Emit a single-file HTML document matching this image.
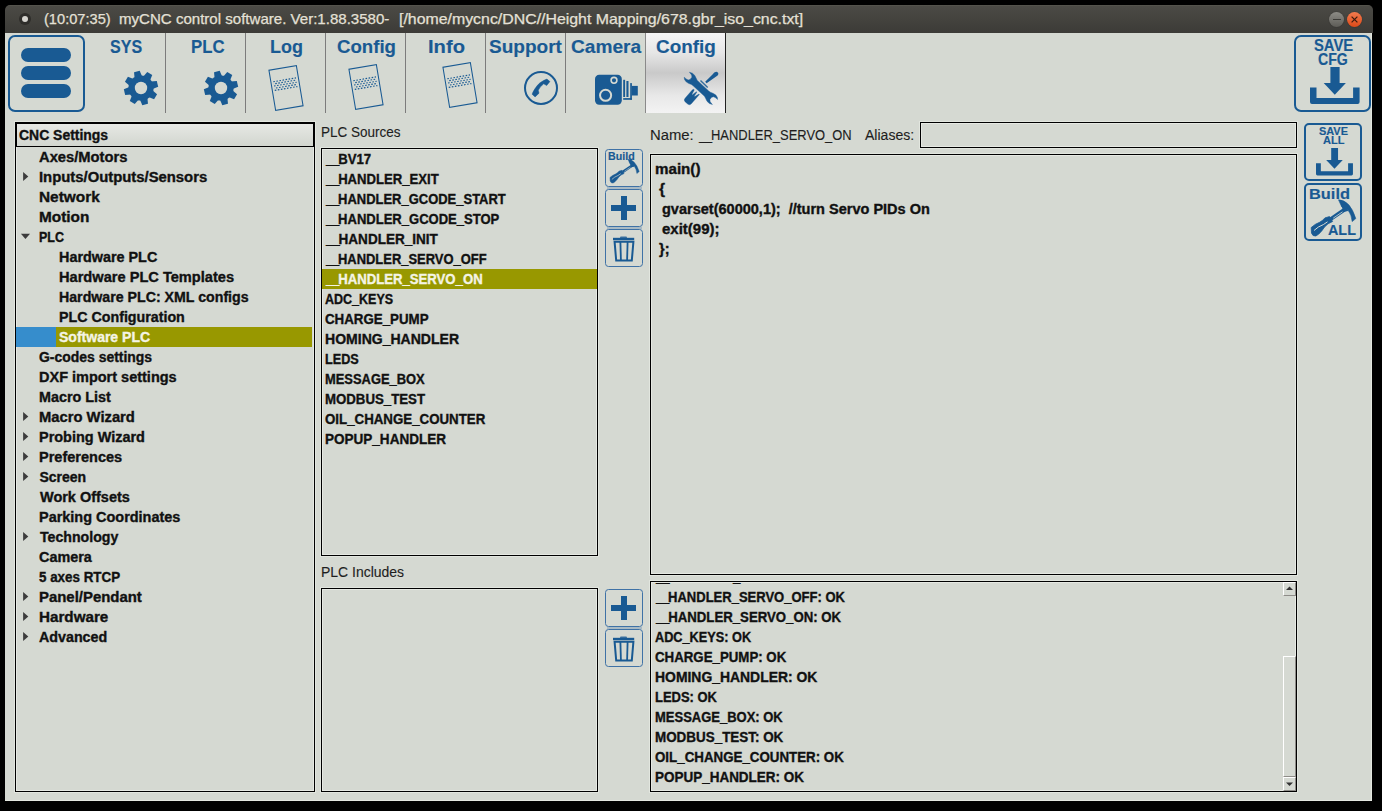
<!DOCTYPE html>
<html><head><meta charset="utf-8">
<style>
html,body{margin:0;padding:0;width:1382px;height:811px;overflow:hidden;background:#000;font-family:"Liberation Sans",sans-serif}
div,svg{position:absolute;box-sizing:border-box}
.x{white-space:pre;line-height:normal;transform-origin:0 0}
.x[style*="font-weight:700"]{-webkit-text-stroke:0.35px currentColor}
.x[style*="color:#195a93"]{-webkit-text-stroke:0.15px currentColor}
.x[style*="color:#1e1e1e"]{-webkit-text-stroke:0.12px currentColor}
.sep{top:33px;width:1px;height:80px;background:#7c7c7c}
.btn{border:1px solid #3f72a6;border-radius:3.5px;width:38px;height:38px}
.f{border:1px solid #000;box-shadow:0 0 0 1px #e2e6df,inset 0 0 0 1px #e6e9e3}
</style></head><body>

<div style="left:5px;top:5px;width:1368px;height:28px;background:linear-gradient(#58574f 0,#4b4a45 1.5px,#3c3b37 100%);border-radius:5px 5px 0 0"></div>
<div style="left:19px;top:12.5px;width:12px;height:12px;border-radius:6px;background:#2e2d2a"></div>
<div style="left:22px;top:15.6px;width:6px;height:6px;border-radius:3px;background:#d6d4cf"></div>
<div style="left:1329px;top:12.2px;width:15px;height:15px;border-radius:8px;background:linear-gradient(#8d8c86,#5d5c57);box-shadow:0 0 1px #222"></div>
<div style="left:1332.5px;top:19px;width:8px;height:1.4px;background:#3b3a36"></div>
<div style="left:1347px;top:12.2px;width:15px;height:15px;border-radius:8px;background:linear-gradient(#f37b4e,#dc4a19);box-shadow:0 0 1px #222"></div>
<svg style="left:1347px;top:12.2px" width="15" height="15" viewBox="0 0 15 15"><path d="M4.6,4.6 L10.4,10.4 M10.4,4.6 L4.6,10.4" stroke="#3a1a0e" stroke-width="1.2"/></svg>
<div style="left:5px;top:33px;width:1367px;height:768px;background:#d5d9d2;border-right:1px solid #e3e7e0;border-bottom:1px solid #e3e7e0"></div>
<div style="left:7.5px;top:34.5px;width:77px;height:77px;border:2px solid #195a93;border-radius:7px"></div>
<div style="left:21px;top:48px;width:50px;height:13.8px;border-radius:7px;background:#195a93"></div>
<div style="left:21px;top:66px;width:50px;height:13.8px;border-radius:7px;background:#195a93"></div>
<div style="left:21px;top:84.4px;width:50px;height:13.8px;border-radius:7px;background:#195a93"></div>
<div style="left:645px;top:33px;width:81px;height:80px;background:linear-gradient(#f5f5f5 0%,#e6e6e6 25%,#c9c9c9 50%,#e8e8e8 78%,#f3f3f3 100%);border-left:1px solid #8a8a8a;border-right:1px solid #222"></div>
<div class="sep" style="left:165px"></div>
<div class="sep" style="left:245px"></div>
<div class="sep" style="left:325px"></div>
<div class="sep" style="left:405px"></div>
<div class="sep" style="left:485px"></div>
<div class="sep" style="left:565px"></div>
<svg style="left:123px;top:70px" width="36" height="36" viewBox="-18 -18 36 36"><g fill="#195a93"><circle r="12.6"/><path d="M-2.9,-17 L2.9,-17 L3.9,-11 L-3.9,-11Z" transform="rotate(-14)"/><path d="M-2.9,-17 L2.9,-17 L3.9,-11 L-3.9,-11Z" transform="rotate(31)"/><path d="M-2.9,-17 L2.9,-17 L3.9,-11 L-3.9,-11Z" transform="rotate(76)"/><path d="M-2.9,-17 L2.9,-17 L3.9,-11 L-3.9,-11Z" transform="rotate(121)"/><path d="M-2.9,-17 L2.9,-17 L3.9,-11 L-3.9,-11Z" transform="rotate(166)"/><path d="M-2.9,-17 L2.9,-17 L3.9,-11 L-3.9,-11Z" transform="rotate(211)"/><path d="M-2.9,-17 L2.9,-17 L3.9,-11 L-3.9,-11Z" transform="rotate(256)"/><path d="M-2.9,-17 L2.9,-17 L3.9,-11 L-3.9,-11Z" transform="rotate(301)"/></g><circle r="6.2" fill="#d5d9d2"/></svg>
<svg style="left:203px;top:70px" width="36" height="36" viewBox="-18 -18 36 36"><g fill="#195a93"><circle r="12.6"/><path d="M-2.9,-17 L2.9,-17 L3.9,-11 L-3.9,-11Z" transform="rotate(-14)"/><path d="M-2.9,-17 L2.9,-17 L3.9,-11 L-3.9,-11Z" transform="rotate(31)"/><path d="M-2.9,-17 L2.9,-17 L3.9,-11 L-3.9,-11Z" transform="rotate(76)"/><path d="M-2.9,-17 L2.9,-17 L3.9,-11 L-3.9,-11Z" transform="rotate(121)"/><path d="M-2.9,-17 L2.9,-17 L3.9,-11 L-3.9,-11Z" transform="rotate(166)"/><path d="M-2.9,-17 L2.9,-17 L3.9,-11 L-3.9,-11Z" transform="rotate(211)"/><path d="M-2.9,-17 L2.9,-17 L3.9,-11 L-3.9,-11Z" transform="rotate(256)"/><path d="M-2.9,-17 L2.9,-17 L3.9,-11 L-3.9,-11Z" transform="rotate(301)"/></g><circle r="6.2" fill="#d5d9d2"/></svg>
<svg style="left:261.1px;top:62.650000000000006px" width="50" height="50" viewBox="-25 -25 50 50"><g transform="rotate(-9.5)"><rect x="-13.9" y="-20.3" width="27.8" height="40.6" fill="none" stroke="#195a93" stroke-width="1.05"/><line x1="-11.5" y1="-8.30" x2="11.5" y2="-8.30" stroke="#195a93" stroke-width="1.1" stroke-dasharray="1.6 1.5" stroke-dashoffset="0"/><line x1="-11.5" y1="-6.10" x2="11.5" y2="-6.10" stroke="#195a93" stroke-width="1.1" stroke-dasharray="1.6 1.5" stroke-dashoffset="1.5"/><line x1="-11.5" y1="-3.90" x2="11.5" y2="-3.90" stroke="#195a93" stroke-width="1.1" stroke-dasharray="1.6 1.5" stroke-dashoffset="0"/><line x1="-11.5" y1="-1.70" x2="11.5" y2="-1.70" stroke="#195a93" stroke-width="1.1" stroke-dasharray="1.6 1.5" stroke-dashoffset="1.5"/><line x1="-11.5" y1="0.50" x2="11.5" y2="0.50" stroke="#195a93" stroke-width="1.1" stroke-dasharray="1.6 1.5" stroke-dashoffset="0"/></g></svg>
<svg style="left:341.25px;top:62.45px" width="50" height="50" viewBox="-25 -25 50 50"><g transform="rotate(-9.5)"><rect x="-13.9" y="-20.3" width="27.8" height="40.6" fill="none" stroke="#195a93" stroke-width="1.05"/><line x1="-11.5" y1="-8.30" x2="11.5" y2="-8.30" stroke="#195a93" stroke-width="1.1" stroke-dasharray="1.6 1.5" stroke-dashoffset="0"/><line x1="-11.5" y1="-6.10" x2="11.5" y2="-6.10" stroke="#195a93" stroke-width="1.1" stroke-dasharray="1.6 1.5" stroke-dashoffset="1.5"/><line x1="-11.5" y1="-3.90" x2="11.5" y2="-3.90" stroke="#195a93" stroke-width="1.1" stroke-dasharray="1.6 1.5" stroke-dashoffset="0"/><line x1="-11.5" y1="-1.70" x2="11.5" y2="-1.70" stroke="#195a93" stroke-width="1.1" stroke-dasharray="1.6 1.5" stroke-dashoffset="1.5"/><line x1="-11.5" y1="0.50" x2="11.5" y2="0.50" stroke="#195a93" stroke-width="1.1" stroke-dasharray="1.6 1.5" stroke-dashoffset="0"/></g></svg>
<svg style="left:434.6px;top:59.75px" width="50" height="50" viewBox="-25 -25 50 50"><g transform="rotate(-9.5)"><rect x="-13.9" y="-20.3" width="27.8" height="40.6" fill="none" stroke="#195a93" stroke-width="1.05"/><line x1="-11.5" y1="-8.30" x2="11.5" y2="-8.30" stroke="#195a93" stroke-width="1.1" stroke-dasharray="1.6 1.5" stroke-dashoffset="0"/><line x1="-11.5" y1="-6.10" x2="11.5" y2="-6.10" stroke="#195a93" stroke-width="1.1" stroke-dasharray="1.6 1.5" stroke-dashoffset="1.5"/><line x1="-11.5" y1="-3.90" x2="11.5" y2="-3.90" stroke="#195a93" stroke-width="1.1" stroke-dasharray="1.6 1.5" stroke-dashoffset="0"/><line x1="-11.5" y1="-1.70" x2="11.5" y2="-1.70" stroke="#195a93" stroke-width="1.1" stroke-dasharray="1.6 1.5" stroke-dashoffset="1.5"/><line x1="-11.5" y1="0.50" x2="11.5" y2="0.50" stroke="#195a93" stroke-width="1.1" stroke-dasharray="1.6 1.5" stroke-dashoffset="0"/></g></svg>
<svg style="left:522.9px;top:70px" width="36" height="36" viewBox="-18 -18 36 36"><circle r="16" fill="none" stroke="#195a93" stroke-width="2"/><path d="M5.9,-8.9 L8.9,-6.4 L5.7,-2.5 L2.7,-4.2 Q-0.8,-1.6 -2.7,2.2 L-2.0,5.2 L-5.9,8.9 L-8.9,6.2 C-7,1.5 -3.2,-3.8 -0.2,-5.7 Q3,-7.8 5.9,-8.9Z" fill="#195a93" stroke="#195a93" stroke-width="0.5" stroke-linejoin="round"/></svg>
<svg style="left:590px;top:70px" width="52" height="40" viewBox="590 70 52 40"><rect x="595" y="74.7" width="26.8" height="30" rx="4.2" fill="#195a93"/><circle cx="605.6" cy="95.3" r="5.55" fill="none" stroke="#d5d9d2" stroke-width="2"/><circle cx="614" cy="80.3" r="2.9" fill="none" stroke="#d5d9d2" stroke-width="1.6"/><rect x="623.2" y="79.8" width="1.9" height="17.2" fill="#195a93"/><rect x="626.4" y="81" width="2.1" height="16" fill="#195a93"/><rect x="630.2" y="83.1" width="1.7" height="16.7" fill="#195a93"/><rect x="623.2" y="98.1" width="8.7" height="1.7" fill="#195a93"/><rect x="631.8" y="85.9" width="6" height="9.6" fill="#195a93"/></svg>
<svg style="left:681px;top:69px" width="40" height="38" viewBox="0 0 40 38"><defs><mask id="wm" maskUnits="userSpaceOnUse" x="0" y="0" width="40" height="38"><rect width="40" height="38" fill="#fff"/><circle cx="7.1" cy="7.1" r="3.1" fill="#000"/><rect x="-3.1" y="-8" width="6.2" height="8" fill="#000" transform="translate(7.1,7.1) rotate(-45)"/><circle cx="32.8" cy="31.9" r="3.1" fill="#000"/><rect x="-3.1" y="0" width="6.2" height="8" fill="#000" transform="translate(32.8,31.9) rotate(-45)"/></mask><mask id="hm" maskUnits="userSpaceOnUse" x="0" y="0" width="40" height="38"><rect width="40" height="38" fill="#fff"/><g transform="translate(10.6,27.4) rotate(-45)"><rect x="3.2" y="-2.2" width="6" height="1.5" fill="#000"/><rect x="3.2" y="0.9" width="6" height="1.5" fill="#000"/></g></mask></defs><path d="M8.4,3.2 L11.4,4.2 L13.8,6.4 L15.1,9.1 L16.3,11.4 L27.7,21.9 L29.4,23.2 L32.4,24.4 L34.9,26.1 L36.3,28.3 L36.6,30.5 L34.6,28.8 L32.6,27.8 L30.7,28.3 L28.9,30.5 L29.2,32.8 L31.4,35.5 L28.4,34.5 L26.0,32.3 L24.7,29.6 L23.5,27.3 L12.1,16.8 L10.4,15.5 L7.4,14.3 L4.9,12.6 L3.5,10.4 L3.2,8.2 L5.2,9.9 L7.2,10.9 L9.1,10.4 L10.9,8.2 L10.6,5.9Z" fill="#195a93" stroke="#195a93" stroke-width="0.4" stroke-linejoin="round"/><g fill="#195a93"><path d="M24.2,12.8 L31.5,5.4 Q33.5,2.2 36.2,2.9 Q38.3,4.2 36.6,6.6 L25.6,14.2Z"/><line x1="19.5" y1="11.4" x2="26.7" y2="18.6" stroke="#195a93" stroke-width="1.4" opacity="0.85"/><path d="M3,-4.2 L13.8,-4.2 L15.2,-3.6 L14.9,-2.7 L10.2,-1.6 L10.2,-1.0 L15,0.0 L15.1,0.7 L10.4,1.3 L10.4,2.0 L15,3.5 L14.8,4.2 L3,4.2 Q0,4.2 0,1.6 L0,-1.6 Q0,-4.2 3,-4.2Z" transform="translate(5.45,33.95) rotate(-48.7)" stroke="#195a93" stroke-width="0.3" stroke-linejoin="round"/></g></svg>
<div style="left:1293.5px;top:34.5px;width:77px;height:77px;border:2px solid #195a93;border-radius:7px"></div>
<svg style="left:1309.5px;top:67.2px" width="50" height="38" viewBox="0 0 50 38"><g fill="#195a93"><rect x="20.4" y="0" width="9.2" height="16.6"/><path d="M13.7,16.1 L35.9,16.1 L24.8,27.8Z"/><path d="M0,20.6 L6.5,20.6 L6.5,31.1 L43.1,31.1 L43.1,20.6 L49.6,20.6 L49.6,35 Q49.6,37 47.6,37 L2,37 Q0,37 0,35Z"/></g></svg>
<div class="f" style="left:15px;top:122px;width:300px;height:670px"></div>
<div style="left:16px;top:123px;width:298px;height:24px;border:1px solid #000;background:linear-gradient(#e6e8e4,#d2d6cf)"></div>
<div style="left:16px;top:327px;width:40px;height:20px;background:#368dcc"></div>
<div style="left:56px;top:327px;width:256px;height:20px;background:#989800"></div>
<svg style="left:22px;top:171px" width="8" height="12" viewBox="0 0 8 12"><path d="M1.1,1 L6.3,5.5 L1.1,10Z" fill="#3c3c3c"/></svg>
<svg style="left:20px;top:232px" width="12" height="8" viewBox="0 0 12 8"><path d="M0.9,1.8 L10,1.8 L5.45,7.1Z" fill="#3c3c3c"/></svg>
<svg style="left:22px;top:411px" width="8" height="12" viewBox="0 0 8 12"><path d="M1.1,1 L6.3,5.5 L1.1,10Z" fill="#3c3c3c"/></svg>
<svg style="left:22px;top:431px" width="8" height="12" viewBox="0 0 8 12"><path d="M1.1,1 L6.3,5.5 L1.1,10Z" fill="#3c3c3c"/></svg>
<svg style="left:22px;top:451px" width="8" height="12" viewBox="0 0 8 12"><path d="M1.1,1 L6.3,5.5 L1.1,10Z" fill="#3c3c3c"/></svg>
<svg style="left:22px;top:471px" width="8" height="12" viewBox="0 0 8 12"><path d="M1.1,1 L6.3,5.5 L1.1,10Z" fill="#3c3c3c"/></svg>
<svg style="left:22px;top:531px" width="8" height="12" viewBox="0 0 8 12"><path d="M1.1,1 L6.3,5.5 L1.1,10Z" fill="#3c3c3c"/></svg>
<svg style="left:22px;top:591px" width="8" height="12" viewBox="0 0 8 12"><path d="M1.1,1 L6.3,5.5 L1.1,10Z" fill="#3c3c3c"/></svg>
<svg style="left:22px;top:611px" width="8" height="12" viewBox="0 0 8 12"><path d="M1.1,1 L6.3,5.5 L1.1,10Z" fill="#3c3c3c"/></svg>
<svg style="left:22px;top:631px" width="8" height="12" viewBox="0 0 8 12"><path d="M1.1,1 L6.3,5.5 L1.1,10Z" fill="#3c3c3c"/></svg>
<div class="f" style="left:321px;top:148px;width:277px;height:408px"></div>
<div style="left:322px;top:269px;width:275px;height:20px;background:#989800"></div>
<div class="btn" style="left:604.8px;top:148.5px"></div>
<svg style="left:603.5px;top:147.3px" width="40.6" height="40.6" viewBox="0 0 62 62"><g fill="#195a93" stroke="#195a93" stroke-linejoin="round"><path d="M9.2,46.5 Q13,43 17.6,41.3 Q21,39.5 22.9,36.9 L27.5,35.6 L30.6,40.5 L26,42.8 Q22,46 19.9,49.7 Q16.5,54 13.8,55 Q10.5,55.5 9.5,52 Z" stroke-width="0.8"/><line x1="28.8" y1="38" x2="42.5" y2="28.6" stroke-width="3.8"/><path d="M36.5,18.8 Q48,19 53.8,37.6 L50.2,40.6 Q48.5,27 39.8,26 Z" stroke-width="0.6"/><path d="M39,23 L45,23.5 L46,30 L41.5,31Z" stroke="none"/></g><path d="M12,49.5 Q16,45.5 21.5,43.5 L25.5,40.8" fill="none" stroke="#d5d9d2" stroke-width="1"/><line x1="31.2" y1="37.2" x2="40.5" y2="30.8" stroke="#d5d9d2" stroke-width="0.8"/></svg>
<div class="btn" style="left:604.8px;top:188.8px"></div>
<div style="left:611.1999999999999px;top:205.4px;width:25.1px;height:5.7px;background:#195a93"></div><div style="left:621.0px;top:195.70000000000002px;width:5.8px;height:24.7px;background:#195a93"></div>
<div class="btn" style="left:604.8px;top:229px"></div>
<svg style="left:604.8px;top:229px" width="38" height="38" viewBox="0 0 38 38"><rect x="8" y="8.8" width="21.2" height="2.4" fill="#195a93"/><rect x="15" y="7.4" width="7" height="2" rx="1" fill="#195a93" opacity="0.8"/><path d="M9.6,12.8 L11.2,31.6 L26.8,31.6 L28.4,12.8Z" fill="none" stroke="#195a93" stroke-width="2"/><line x1="15.4" y1="13" x2="15.9" y2="31" stroke="#195a93" stroke-width="1.8"/><line x1="22.6" y1="13" x2="22.1" y2="31" stroke="#195a93" stroke-width="1.8"/></svg>
<div style="left:606.5px;top:186.6px;width:35px;height:2.2px;background:#a9bac4"></div>
<div style="left:606.5px;top:227px;width:35px;height:2.2px;background:#a9bac4"></div>
<div style="left:606.5px;top:626.6px;width:35px;height:2.2px;background:#a9bac4"></div>
<div class="f" style="left:920px;top:122px;width:377px;height:26px"></div>
<div class="f" style="left:650px;top:154px;width:647px;height:421px"></div>
<div style="left:1304px;top:123px;width:58px;height:58px;border:2px solid #195a93;border-radius:5px"></div>
<svg style="left:1316px;top:147.9px" width="37.25" height="28.31" viewBox="0 0 50 38"><g fill="#195a93"><rect x="20.4" y="0" width="9.2" height="16.6"/><path d="M13.7,16.1 L35.9,16.1 L24.8,27.8Z"/><path d="M0,20.6 L6.5,20.6 L6.5,31.1 L43.1,31.1 L43.1,20.6 L49.6,20.6 L49.6,35 Q49.6,37 47.6,37 L2,37 Q0,37 0,35Z"/></g></svg>
<div style="left:1304px;top:183px;width:58px;height:58px;border:2px solid #195a93;border-radius:5px"></div>
<svg style="left:1302px;top:181px" width="62.0" height="62.0" viewBox="0 0 62 62"><g fill="#195a93" stroke="#195a93" stroke-linejoin="round"><path d="M9.2,46.5 Q13,43 17.6,41.3 Q21,39.5 22.9,36.9 L27.5,35.6 L30.6,40.5 L26,42.8 Q22,46 19.9,49.7 Q16.5,54 13.8,55 Q10.5,55.5 9.5,52 Z" stroke-width="0.8"/><line x1="28.8" y1="38" x2="42.5" y2="28.6" stroke-width="3.8"/><path d="M36.5,18.8 Q48,19 53.8,37.6 L50.2,40.6 Q48.5,27 39.8,26 Z" stroke-width="0.6"/><path d="M39,23 L45,23.5 L46,30 L41.5,31Z" stroke="none"/></g><path d="M12,49.5 Q16,45.5 21.5,43.5 L25.5,40.8" fill="none" stroke="#d5d9d2" stroke-width="1"/><line x1="31.2" y1="37.2" x2="40.5" y2="30.8" stroke="#d5d9d2" stroke-width="0.8"/></svg>
<div class="f" style="left:321px;top:588px;width:277px;height:204px"></div>
<div class="btn" style="left:604.8px;top:588.6px"></div>
<div style="left:611.1999999999999px;top:605.2px;width:25.1px;height:5.7px;background:#195a93"></div><div style="left:621.0px;top:595.5px;width:5.8px;height:24.7px;background:#195a93"></div>
<div class="btn" style="left:604.8px;top:629px"></div>
<svg style="left:604.8px;top:629px" width="38" height="38" viewBox="0 0 38 38"><rect x="8" y="8.8" width="21.2" height="2.4" fill="#195a93"/><rect x="15" y="7.4" width="7" height="2" rx="1" fill="#195a93" opacity="0.8"/><path d="M9.6,12.8 L11.2,31.6 L26.8,31.6 L28.4,12.8Z" fill="none" stroke="#195a93" stroke-width="2"/><line x1="15.4" y1="13" x2="15.9" y2="31" stroke="#195a93" stroke-width="1.8"/><line x1="22.6" y1="13" x2="22.1" y2="31" stroke="#195a93" stroke-width="1.8"/></svg>
<div class="f" style="left:650px;top:581px;width:647px;height:211px"></div>
<div class="x" style="left:44.42px;top:11.00px;font-size:14.5px;font-weight:400;color:#e4e0d6;transform:scaleX(1.0082);-webkit-text-stroke:0.25px #e4e0d6">(10:07:35)</div>
<div class="x" style="left:119.46px;top:11.00px;font-size:14.5px;font-weight:400;color:#e4e0d6;transform:scaleX(1.0386);-webkit-text-stroke:0.25px #e4e0d6">myCNC control software. Ver:1.88.3580-</div>
<div class="x" style="left:399.31px;top:11.00px;font-size:14.5px;font-weight:400;color:#e4e0d6;transform:scaleX(1.0950);-webkit-text-stroke:0.25px #e4e0d6">[/home/mycnc/DNC//Height Mapping/678.gbr_iso_cnc.txt]</div>
<div class="x" style="left:109.53px;top:36.00px;font-size:19px;font-weight:700;color:#195a93;transform:scaleX(0.8435);">SYS</div>
<div class="x" style="left:190.95px;top:36.00px;font-size:19px;font-weight:700;color:#195a93;transform:scaleX(0.8828);">PLC</div>
<div class="x" style="left:269.57px;top:36.00px;font-size:19px;font-weight:700;color:#195a93;transform:scaleX(0.9452);">Log</div>
<div class="x" style="left:337.31px;top:36.00px;font-size:19px;font-weight:700;color:#195a93;transform:scaleX(0.9806);">Config</div>
<div class="x" style="left:428.42px;top:36.00px;font-size:19px;font-weight:700;color:#195a93;transform:scaleX(1.0616);">Info</div>
<div class="x" style="left:488.65px;top:36.00px;font-size:19px;font-weight:700;color:#195a93;transform:scaleX(1.0010);">Support</div>
<div class="x" style="left:571.20px;top:36.00px;font-size:19px;font-weight:700;color:#195a93;transform:scaleX(1.0054);">Camera</div>
<div class="x" style="left:656.00px;top:36.00px;font-size:19px;font-weight:700;color:#195a93;transform:scaleX(0.9944);">Config</div>
<div class="x" style="left:1313.59px;top:37.00px;font-size:16px;font-weight:700;color:#195a93;transform:scaleX(0.9236);">SAVE</div>
<div class="x" style="left:1318.40px;top:51.00px;font-size:16px;font-weight:700;color:#195a93;transform:scaleX(0.8840);">CFG</div>
<div class="x" style="left:19.15px;top:127.00px;font-size:14px;font-weight:700;color:#111;transform:scaleX(0.9958);">CNC Settings</div>
<div class="x" style="left:39.36px;top:149.00px;font-size:14px;font-weight:700;color:#111;transform:scaleX(1.0514);">Axes/Motors</div>
<div class="x" style="left:38.82px;top:169.00px;font-size:14px;font-weight:700;color:#111;transform:scaleX(1.0601);">Inputs/Outputs/Sensors</div>
<div class="x" style="left:38.79px;top:189.00px;font-size:14px;font-weight:700;color:#111;transform:scaleX(1.0998);">Network</div>
<div class="x" style="left:38.79px;top:209.00px;font-size:14px;font-weight:700;color:#111;transform:scaleX(1.0969);">Motion</div>
<div class="x" style="left:38.97px;top:229.00px;font-size:14px;font-weight:700;color:#111;transform:scaleX(0.8897);">PLC</div>
<div class="x" style="left:58.85px;top:249.00px;font-size:14px;font-weight:700;color:#111;transform:scaleX(1.0268);">Hardware PLC</div>
<div class="x" style="left:58.84px;top:269.00px;font-size:14px;font-weight:700;color:#111;transform:scaleX(1.0434);">Hardware PLC Templates</div>
<div class="x" style="left:58.86px;top:289.00px;font-size:14px;font-weight:700;color:#111;transform:scaleX(1.0127);">Hardware PLC: XML configs</div>
<div class="x" style="left:58.86px;top:309.00px;font-size:14px;font-weight:700;color:#111;transform:scaleX(1.0174);">PLC Configuration</div>
<div class="x" style="left:59.37px;top:329.00px;font-size:14px;font-weight:700;color:#f4f4e4;transform:scaleX(1.0006);">Software PLC</div>
<div class="x" style="left:39.25px;top:349.00px;font-size:14px;font-weight:700;color:#111;transform:scaleX(0.9956);">G-codes settings</div>
<div class="x" style="left:38.84px;top:369.00px;font-size:14px;font-weight:700;color:#111;transform:scaleX(1.0348);">DXF import settings</div>
<div class="x" style="left:38.85px;top:389.00px;font-size:14px;font-weight:700;color:#111;transform:scaleX(1.0261);">Macro List</div>
<div class="x" style="left:38.83px;top:409.00px;font-size:14px;font-weight:700;color:#111;transform:scaleX(1.0547);">Macro Wizard</div>
<div class="x" style="left:38.85px;top:429.00px;font-size:14px;font-weight:700;color:#111;transform:scaleX(1.0333);">Probing Wizard</div>
<div class="x" style="left:38.84px;top:449.00px;font-size:14px;font-weight:700;color:#111;transform:scaleX(1.0375);">Preferences</div>
<div class="x" style="left:39.38px;top:469.00px;font-size:14px;font-weight:700;color:#111;transform:scaleX(1.0000);">Screen</div>
<div class="x" style="left:39.75px;top:489.00px;font-size:14px;font-weight:700;color:#111;transform:scaleX(1.0339);">Work Offsets</div>
<div class="x" style="left:38.85px;top:509.00px;font-size:14px;font-weight:700;color:#111;transform:scaleX(1.0325);">Parking Coordinates</div>
<div class="x" style="left:39.62px;top:529.00px;font-size:14px;font-weight:700;color:#111;transform:scaleX(1.0097);">Technology</div>
<div class="x" style="left:39.24px;top:549.00px;font-size:14px;font-weight:700;color:#111;transform:scaleX(1.0275);">Camera</div>
<div class="x" style="left:39.27px;top:569.00px;font-size:14px;font-weight:700;color:#111;transform:scaleX(0.9562);">5 axes RTCP</div>
<div class="x" style="left:38.82px;top:589.00px;font-size:14px;font-weight:700;color:#111;transform:scaleX(1.0660);">Panel/Pendant</div>
<div class="x" style="left:38.80px;top:609.00px;font-size:14px;font-weight:700;color:#111;transform:scaleX(1.0864);">Hardware</div>
<div class="x" style="left:39.37px;top:629.00px;font-size:14px;font-weight:700;color:#111;transform:scaleX(1.0194);">Advanced</div>
<div class="x" style="left:320.71px;top:124.00px;font-size:14px;font-weight:400;color:#1e1e1e;transform:scaleX(0.9645);">PLC Sources</div>
<div class="x" style="left:325.57px;top:151.00px;font-size:14px;font-weight:700;color:#111;transform:scaleX(0.9389);"><span style="letter-spacing:-1.3px">__</span>BV17</div>
<div class="x" style="left:325.57px;top:171.00px;font-size:14px;font-weight:700;color:#111;transform:scaleX(0.9362);"><span style="letter-spacing:-1.3px">__</span>HANDLER_EXIT</div>
<div class="x" style="left:325.57px;top:191.00px;font-size:14px;font-weight:700;color:#111;transform:scaleX(0.9268);"><span style="letter-spacing:-1.3px">__</span>HANDLER_GCODE_START</div>
<div class="x" style="left:325.57px;top:211.00px;font-size:14px;font-weight:700;color:#111;transform:scaleX(0.9307);"><span style="letter-spacing:-1.3px">__</span>HANDLER_GCODE_STOP</div>
<div class="x" style="left:325.57px;top:231.00px;font-size:14px;font-weight:700;color:#111;transform:scaleX(0.9669);"><span style="letter-spacing:-1.3px">__</span>HANDLER_INIT</div>
<div class="x" style="left:325.57px;top:251.00px;font-size:14px;font-weight:700;color:#111;transform:scaleX(0.9240);"><span style="letter-spacing:-1.3px">__</span>HANDLER_SERVO_OFF</div>
<div class="x" style="left:325.57px;top:271.00px;font-size:14px;font-weight:700;color:#f4f4e4;transform:scaleX(0.9393);"><span style="letter-spacing:-1.3px">__</span>HANDLER_SERVO_ON</div>
<div class="x" style="left:325.12px;top:291.00px;font-size:14px;font-weight:700;color:#111;transform:scaleX(0.8929);">ADC_KEYS</div>
<div class="x" style="left:324.97px;top:311.00px;font-size:14px;font-weight:700;color:#111;transform:scaleX(0.9511);">CHARGE_PUMP</div>
<div class="x" style="left:324.57px;top:331.00px;font-size:14px;font-weight:700;color:#111;transform:scaleX(1.0021);">HOMING_HANDLER</div>
<div class="x" style="left:324.66px;top:351.00px;font-size:14px;font-weight:700;color:#111;transform:scaleX(0.9031);">LEDS</div>
<div class="x" style="left:324.64px;top:371.00px;font-size:14px;font-weight:700;color:#111;transform:scaleX(0.9223);">MESSAGE_BOX</div>
<div class="x" style="left:324.62px;top:391.00px;font-size:14px;font-weight:700;color:#111;transform:scaleX(0.9451);">MODBUS_TEST</div>
<div class="x" style="left:324.98px;top:411.00px;font-size:14px;font-weight:700;color:#111;transform:scaleX(0.9494);">OIL_CHANGE_COUNTER</div>
<div class="x" style="left:324.60px;top:431.00px;font-size:14px;font-weight:700;color:#111;transform:scaleX(0.9661);">POPUP_HANDLER</div>
<div class="x" style="left:608.12px;top:150.00px;font-size:11px;font-weight:700;color:#195a93;transform:scaleX(0.9692);">Build</div>
<div class="x" style="left:649.71px;top:127.00px;font-size:14px;font-weight:400;color:#1e1e1e;transform:scaleX(1.0598);">Name:</div>
<div class="x" style="left:699.43px;top:127.00px;font-size:14px;font-weight:400;color:#1e1e1e;transform:scaleX(0.9241);"><span style="letter-spacing:-1.3px">__</span>HANDLER_SERVO_ON</div>
<div class="x" style="left:864.97px;top:127.00px;font-size:14px;font-weight:400;color:#1e1e1e;transform:scaleX(1.0016);">Aliases:</div>
<div class="x" style="left:654.90px;top:161.00px;font-size:14px;font-weight:700;color:#111;transform:scaleX(1.0815);">main()</div>
<div class="x" style="left:658.77px;top:181.00px;font-size:14px;font-weight:700;color:#111;transform:scaleX(1.1077);">{</div>
<div class="x" style="left:661.83px;top:201.00px;font-size:14px;font-weight:700;color:#111;transform:scaleX(1.0370);">gvarset(60000,1);  //turn Servo PIDs On</div>
<div class="x" style="left:661.82px;top:221.00px;font-size:14px;font-weight:700;color:#111;transform:scaleX(1.0699);">exit(99);</div>
<div class="x" style="left:658.79px;top:241.00px;font-size:14px;font-weight:700;color:#111;transform:scaleX(1.0353);">};</div>
<div class="x" style="left:1319.18px;top:125.00px;font-size:11px;font-weight:700;color:#195a93;transform:scaleX(0.9938);">SAVE</div>
<div class="x" style="left:1323.19px;top:134.00px;font-size:11.5px;font-weight:700;color:#195a93;transform:scaleX(0.9618);">ALL</div>
<div class="x" style="left:1308.82px;top:186.00px;font-size:14.5px;font-weight:700;color:#195a93;transform:scaleX(1.1299);">Build</div>
<div class="x" style="left:1327.88px;top:222.00px;font-size:14.5px;font-weight:700;color:#195a93;transform:scaleX(0.9900);">ALL</div>
<div class="x" style="left:320.58px;top:564.00px;font-size:14px;font-weight:400;color:#1e1e1e;transform:scaleX(0.9972);">PLC Includes</div>
<div style="left:651px;top:582px;width:632px;height:209px;overflow:hidden"><div style="left:0;top:1px;width:632px;height:5px;overflow:hidden"><div class="x" style="left:4.52px;top:-13.88px;font-size:14px;font-weight:700;color:#111;transform:scaleX(0.9450)"><span style="letter-spacing:-1.3px">__</span>HANDLER_INIT: OK</div></div><div class="x" style="left:4.52px;top:7.12px;font-size:14px;font-weight:700;color:#111;transform:scaleX(0.9294)"><span style="letter-spacing:-1.3px">__</span>HANDLER_SERVO_OFF: OK</div><div class="x" style="left:4.52px;top:27.12px;font-size:14px;font-weight:700;color:#111;transform:scaleX(0.9427)"><span style="letter-spacing:-1.3px">__</span>HANDLER_SERVO_ON: OK</div><div class="x" style="left:4.06px;top:47.12px;font-size:14px;font-weight:700;color:#111;transform:scaleX(0.9083)">ADC_KEYS: OK</div><div class="x" style="left:3.93px;top:67.12px;font-size:14px;font-weight:700;color:#111;transform:scaleX(0.9481)">CHARGE_PUMP: OK</div><div class="x" style="left:3.53px;top:87.12px;font-size:14px;font-weight:700;color:#111;transform:scaleX(0.9941)">HOMING_HANDLER: OK</div><div class="x" style="left:3.59px;top:107.12px;font-size:14px;font-weight:700;color:#111;transform:scaleX(0.9260)">LEDS: OK</div><div class="x" style="left:3.59px;top:127.12px;font-size:14px;font-weight:700;color:#111;transform:scaleX(0.9274)">MESSAGE_BOX: OK</div><div class="x" style="left:3.56px;top:147.12px;font-size:14px;font-weight:700;color:#111;transform:scaleX(0.9589)">MODBUS_TEST: OK</div><div class="x" style="left:3.92px;top:167.12px;font-size:14px;font-weight:700;color:#111;transform:scaleX(0.9522)">OIL_CHANGE_COUNTER: OK</div><div class="x" style="left:3.56px;top:187.12px;font-size:14px;font-weight:700;color:#111;transform:scaleX(0.9626)">POPUP_HANDLER: OK</div></div>
<div style="left:1283px;top:582px;width:13px;height:14px;background:#d5d9d2;border-top:1px solid #fff;border-left:1px solid #fff;border-right:1px solid #8e8c88;border-bottom:1px solid #8e8c88"></div>
<svg style="left:1283px;top:582px" width="13" height="14" viewBox="0 0 13 14"><path d="M3,8 L6.5,4.6 L10,8Z" fill="#333"/></svg>
<div style="left:1283px;top:656px;width:13px;height:121px;background:#d5d9d2;border-top:1px solid #fff;border-left:1px solid #fff;border-right:1px solid #8e8c88;border-bottom:1px solid #8e8c88"></div>
<div style="left:1283px;top:777px;width:13px;height:14px;background:#d5d9d2;border-top:1px solid #fff;border-left:1px solid #fff;border-right:1px solid #8e8c88;border-bottom:1px solid #8e8c88"></div>
<svg style="left:1283px;top:777px" width="13" height="14" viewBox="0 0 13 14"><path d="M3,5.5 L10,5.5 L6.5,9Z" fill="#333"/></svg>
</body></html>
